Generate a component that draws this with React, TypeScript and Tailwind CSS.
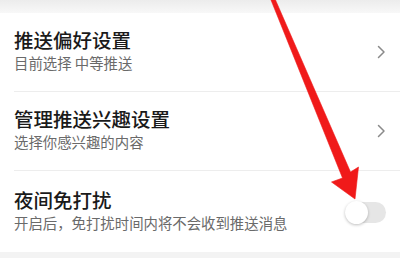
import React from "react";

function Chevron() {
  return (
    <svg width="10" height="14" viewBox="0 0 10 14" className="shrink-0">
      <path d="M2.5 1.5 L8 7 L2.5 12.5" fill="none" stroke="#8a8a8a" strokeWidth="1.5" strokeLinecap="round" strokeLinejoin="round" />
    </svg>
  );
}

function Row({ title, sub, right, last }: { title: string; sub: string; right: React.ReactNode; last?: boolean }) {
  return (
    <div className={`flex items-center justify-between pr-[14px] ${last ? "h-[81px]" : "h-[78px]"}`}>
      <div className="flex flex-col pb-[3px]">
        <div className="text-[19.5px] leading-[24px] text-[#1a1a1a] font-medium">{title}</div>
        <div className="mt-[1px] text-[14.4px] leading-[20px] text-[#6a6a6a]">{sub}</div>
      </div>
      {right}
    </div>
  );
}

export default function App() {
  return (
    <div
      className="relative w-[400px] h-[258px] overflow-hidden bg-white"
      style={{ fontFamily: '"Noto Sans CJK SC", "Noto Sans", sans-serif' }}
    >
      <div className="h-[13px] bg-gradient-to-b from-[#ececec] to-[#f8f8f8]" />
      <div className="pl-[14px] bg-white">
        <div className="border-b border-[#ededed]">
          <Row title="推送偏好设置" sub="目前选择 中等推送" right={<Chevron />} />
        </div>
        <div className="border-b border-[#ededed]">
          <Row title="管理推送兴趣设置" sub="选择你感兴趣的内容" right={<Chevron />} />
        </div>
        <Row
          title="夜间免打扰"
          sub="开启后，免打扰时间内将不会收到推送消息"
          last
          right={
            <div className="relative w-[41px] h-[21px] rounded-full bg-[#e6e6e6] mt-[1px]">
              <div className="absolute left-0 top-[-1px] w-[23px] h-[23px] rounded-full bg-white shadow-[0_1px_3px_rgba(0,0,0,0.25)]" />
            </div>
          }
        />
      </div>
      <div className="h-[10px] bg-[#f3f3f3]" />
      <svg className="absolute inset-0 pointer-events-none" width="400" height="258" viewBox="0 0 400 258">
        <polygon
          points="271,0 275.5,0 350.5,172 358.5,167 355,199 331.5,182 342.5,178"
          fill="#f01a1a"
          stroke="#f01a1a"
          strokeWidth="0.6"
          strokeLinejoin="round"
        />
      </svg>
    </div>
  );
}
